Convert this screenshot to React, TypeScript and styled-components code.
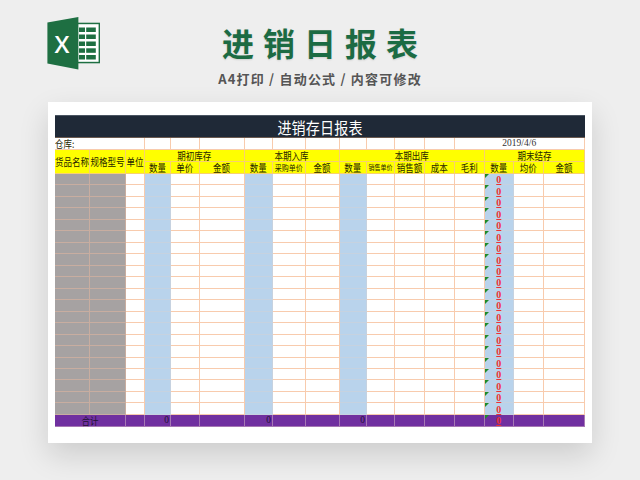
import React from "react";
import styled, { createGlobalStyle } from "styled-components";

const Global = createGlobalStyle`
  html, body { margin: 0; padding: 0; background: #eeeeee; }
  #root { width: 640px; height: 480px; overflow: hidden; }
`;

const CJK = `"Noto Sans CJK SC", "Noto Sans", sans-serif`;
const LINE = "#f8cbad";

const Page = styled.div`
  width: 640px;
  height: 480px;
  background: #eeeeee;
  overflow: hidden;
`;
const Header = styled.header`
  height: 102px;
  display: grid;
  grid-template-columns: 1fr auto 1fr;
`;
const LogoSlot = styled.div`
  padding: 17px 0 0 47px;
`;
const Heading = styled.div`
  display: flex;
  flex-direction: column;
  align-items: center;
  font-family: ${CJK};
`;
const Title = styled.h1`
  margin: 19px 0 0 0;
  font-size: 32px;
  line-height: 46px;
  font-weight: 700;
  letter-spacing: 9px;
  margin-right: -9px;
  color: #1c6b43;
  text-shadow: 0 1px 2px rgba(0, 0, 0, 0.12);
`;
const Subtitle = styled.p`
  margin: 5px 0 0;
  font-size: 13px;
  line-height: 18px;
  font-weight: 700;
  letter-spacing: 1.2px;
  color: #555555;
`;
const Card = styled.section`
  width: 530px;
  height: 312px;
  margin: 0 auto;
  padding: 13px 7px 16px;
  background: #ffffff;
  box-shadow: 0 12px 28px rgba(0, 0, 0, 0.14);
`;
const Sheet = styled.div`
  width: 530px;
  height: 312px;
  display: grid;
  grid-template-columns: 35px 36px 19px 26px 28.5px 45px 28.5px 32.5px 34px 27.5px 28px 30px 29.5px 30.5px 28.5px 30.5px 41px;
  grid-template-rows: 23px 12px 12px 12px repeat(21, 11.476px) 12px;
  font-family: ${CJK};
  color: #262600;
  border-right: 1px solid #8c8c8c;
  border-bottom: 1.5px solid #666666;
  box-sizing: border-box;
`;
const SheetTitle = styled.div`
  grid-column: 1 / -1;
  background: #1f2937;
  border-top: 1px solid #4a5562;
  border-bottom: 1px solid #6b5a50;
  color: #ffffff;
  font-size: 14px;
  letter-spacing: 0.2px;
  display: flex;
  align-items: center;
  justify-content: center;
  box-sizing: border-box;
`;
const Cell = styled.div<{
  $bg?: string;
  $line?: string;
  $col?: string;
  $row?: string;
  $align?: string;
}>`
  grid-column: ${(p) => p.$col ?? "auto"};
  grid-row: ${(p) => p.$row ?? "auto"};
  position: relative;
  background: ${(p) => p.$bg ?? "#ffffff"};
  border-right: 1px solid ${(p) => p.$line ?? LINE};
  border-bottom: 1px solid ${(p) => p.$line ?? LINE};
  box-sizing: border-box;
  min-width: 0;
  display: flex;
  align-items: center;
  justify-content: ${(p) => p.$align ?? "center"};
  line-height: 1;
  white-space: nowrap;
`;
const HeadCell = styled(Cell).attrs({ $bg: "#ffff00", $line: "#f8d070" })``;
const Total = styled(Cell).attrs({ $bg: "#7030a0", $line: "#a678b4" })`
  color: #221133;
`;
const Label = styled.span<{ $size?: number }>`
  display: inline-block;
  font-size: ${(p) => p.$size ?? 8.5}px;
  transform: scaleY(1.2);
`;
const TitleLabel = styled.span`
  display: inline-block;
  transform: scaleY(1.15);
`;
const Zero = styled.span`
  font-family: "Liberation Serif", serif;
  font-size: 10px;
  font-weight: 700;
  color: #ee3030;
  text-decoration: underline;
  transform: translateY(1px);
`;
const Flag = styled.i`
  position: absolute;
  left: 0;
  top: 0;
  width: 0;
  height: 0;
  border-top: 4px solid #1d8a2a;
  border-right: 4px solid transparent;
`;
const Plain = styled.span`
  display: inline-block;
  font-family: "Liberation Serif", serif;
  font-size: 9.5px;
  color: #333333;
  transform: scaleY(1.15);
`;
const TotalNumber = styled(Plain)`
  margin-right: 1px;
  color: #221133;
`;

const ExcelLogo = () => (
  <svg width="54" height="54" viewBox="47 17 54 54" style={{ display: "block" }}>
    <rect x="78" y="22.7" width="22" height="40.6" fill="#1e6f42" />
    <rect x="78" y="24.2" width="20.6" height="37.6" fill="#ffffff" />
    {[27.5, 34.5, 41.5, 48.3, 55].map((y) => (
      <g key={y} fill="#1e6f42">
        <rect x="79" y={y} width="6" height="4.5" />
        <rect x="86.2" y={y} width="9.6" height="4.5" />
      </g>
    ))}
    <polygon points="47.4,22.6 78.4,17 78.4,69.6 47.4,63.4" fill="#1e6f42" />
    <text
      x="62"
      y="52.5"
      textAnchor="middle"
      fontFamily="'Open Sans', sans-serif"
      fontWeight="600"
      fontSize="24"
      fill="#ffffff"
    >
      X
    </text>
  </svg>
);

const metaCols = Array.from({ length: 10 });
const groups = ["期初库存", "本期入库", "本期出库", "期末结存"];
const groupSpans = ["4 / span 3", "7 / span 3", "10 / span 5", "15 / span 3"];
const subHeads: { text: string; size?: number }[] = [
  { text: "数量" },
  { text: "单价" },
  { text: "金额" },
  { text: "数量" },
  { text: "采购单价", size: 7 },
  { text: "金额" },
  { text: "数量" },
  { text: "销售单价", size: 6 },
  { text: "销售额" },
  { text: "成本" },
  { text: "毛利" },
  { text: "数量" },
  { text: "均价" },
  { text: "金额" },
];
const rows = Array.from({ length: 21 });
const columns = Array.from({ length: 17 }, (_, i) => i);
const BLUE = new Set([3, 6, 9, 14]);

const cellFill = (c: number) =>
  c < 2 ? "#a6a2a2" : BLUE.has(c) ? "#b9d3ec" : "#ffffff";
const cellLine = (c: number) =>
  BLUE.has(c) ? "#c6d2e0" : c < 2 ? "#c8ada0" : LINE;

export default function App() {
  return (
    <Page>
      <Global />
      <Header>
        <LogoSlot>
          <ExcelLogo />
        </LogoSlot>
        <Heading>
          <Title>进销日报表</Title>
          <Subtitle>A4打印 / 自动公式 / 内容可修改</Subtitle>
        </Heading>
        <div />
      </Header>
      <Card>
        <Sheet>
          <SheetTitle>
            <TitleLabel>进销存日报表</TitleLabel>
          </SheetTitle>

          <Cell $col="1 / span 3" $align="flex-start">
            <Label>仓库:</Label>
          </Cell>
          {metaCols.map((_, i) => (
            <Cell key={i} />
          ))}
          <Cell $col="14 / span 4">
            <Plain>2019/4/6</Plain>
          </Cell>

          <HeadCell $col="1" $row="3 / span 2"><Label>货品名称</Label></HeadCell>
          <HeadCell $col="2" $row="3 / span 2"><Label>规格型号</Label></HeadCell>
          <HeadCell $col="3" $row="3 / span 2"><Label>单位</Label></HeadCell>
          {groups.map((g, i) => (
            <HeadCell key={g} $col={groupSpans[i]} $row="3">
              <Label>{g}</Label>
            </HeadCell>
          ))}
          {subHeads.map((h, i) => (
            <HeadCell key={i} $col={String(i + 4)} $row="4">
              <Label $size={h.size}>{h.text}</Label>
            </HeadCell>
          ))}

          {rows.map((_, r) =>
            columns.map((c) => (
              <Cell key={`${r}-${c}`} $bg={cellFill(c)} $line={cellLine(c)}>
                {c === 14 && <Flag />}
                {c === 14 && <Zero>0</Zero>}
              </Cell>
            ))
          )}

          <Total $col="1 / span 2"><Label>合计</Label></Total>
          {columns.slice(2).map((c) => (
            <Total key={c} $align={c === 14 ? "center" : "flex-end"}>
              {c === 14 && <Flag />}
              {c === 14 ? <Zero>0</Zero> : [3, 6, 9].includes(c) ? <TotalNumber>0</TotalNumber> : null}
            </Total>
          ))}
        </Sheet>
      </Card>
    </Page>
  );
}
